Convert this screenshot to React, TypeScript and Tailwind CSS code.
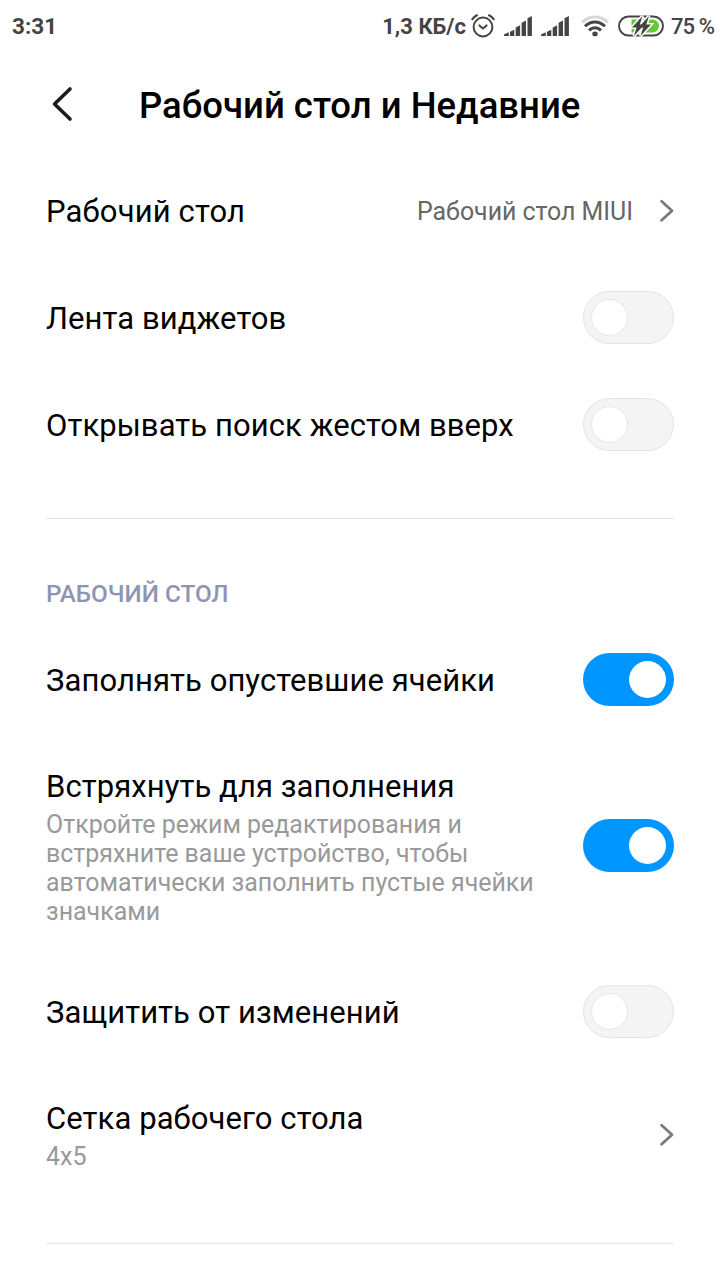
import type { ReactNode } from "react";

function AlarmIcon() {
  return (
    <svg className="mb-[1px]" width="24" height="24" viewBox="0 0 24 24" fill="none" stroke="#444" strokeLinecap="round" strokeLinejoin="round">
      <circle cx="12" cy="13" r="9.4" strokeWidth="2" />
      <path d="M8.4 11.4 12 14.6 15.6 11.4" strokeWidth="2" />
      <path d="M1.4 5.2C2.6 3.5 4 2.2 5.9 1.3M22.6 5.2C21.4 3.5 20 2.2 18.1 1.3" strokeWidth="2.2" />
    </svg>
  );
}

function SignalIcon() {
  return (
    <svg width="28" height="20" viewBox="0 0 28 20" fill="#444">
      <path d="M0 20V18.6L4.8 16.2V20Z" />
      <path d="M6 15.8 10.3 13.8V20H6Z" />
      <path d="M11.7 11.4 16.1 9.2V20H11.7Z" />
      <path d="M17.6 6.8 22 4.6V20H17.6Z" />
      <path d="M23.5 2.2 27.9 0V20H23.5Z" />
    </svg>
  );
}

function WifiIcon() {
  return (
    <svg width="28" height="22" viewBox="0 0 28 22" fill="none" strokeWidth="3">
      <path d="M1 7.3C8.4 0.2 19.6 0.2 27 7.3" stroke="#d6d6d6" />
      <path d="M4 11.3C9.8 5.6 18.2 5.6 24 11.3" stroke="#444" />
      <path d="M8 15.4C11.5 12 16.5 12 20 15.4" stroke="#444" />
      <ellipse cx="14" cy="18.9" rx="2.7" ry="2.3" fill="#444" />
    </svg>
  );
}

function BatteryIcon() {
  return (
    <svg width="46" height="22" viewBox="0 0 46 22">
      <rect x="1" y="1.5" width="44" height="19" rx="9.5" fill="#fff" stroke="#444" strokeWidth="1.9" />
      <path d="M13.5 4.5H34.5A6.5 6.5 0 0 1 34.5 17.5H13.5Z" fill="#62c936" />
      <g stroke="#fff" strokeWidth="3" fill="#fff">
        <path d="M24.5 1 14 12.5H18.6L16 21 26.5 9.5H21.8Z" />
        <path d="M31 1 20.5 12.5H25.1L22.5 21 33 9.5H28.3Z" />
      </g>
      <g fill="#444">
        <path d="M24.5 1 14 12.5H18.6L16 21 26.5 9.5H21.8Z" />
        <path d="M31 1 20.5 12.5H25.1L22.5 21 33 9.5H28.3Z" />
      </g>
    </svg>
  );
}

function Chevron() {
  return (
    <svg className="shrink-0" width="15" height="24" viewBox="0 0 15 24" fill="none" stroke="#7a7a7a" strokeWidth="2.8" strokeLinecap="round" strokeLinejoin="round">
      <path d="M2.6 2.2 13 11.7 2.6 21.2" />
    </svg>
  );
}

function Toggle({ on = false }: { on?: boolean }) {
  return on ? (
    <div role="switch" aria-checked="true" className="flex h-[53px] w-[91px] shrink-0 items-center justify-end rounded-full bg-[#0096ff] pr-[8px]">
      <div className="size-[37px] rounded-full bg-white" />
    </div>
  ) : (
    <div role="switch" aria-checked="false" className="flex h-[53px] w-[91px] shrink-0 items-center rounded-full border border-[#e3e3e3] bg-[#f4f4f4] pl-[7px]">
      <div className="size-[37px] rounded-full border border-[#e6e6e6] bg-white" />
    </div>
  );
}

function Row({ title, detail, height = "h-[107px]", children }: { title: string; detail?: string; height?: string; children: ReactNode }) {
  return (
    <div className={`flex items-center justify-between ${height}`}>
      <div className="w-[500px] pt-[2px]">
        <div className="text-[31px] leading-[38px] tracking-[0.08px] whitespace-nowrap">{title}</div>
        {detail && <div className="mt-[4px] text-[24.95px] leading-[29px] whitespace-pre-line text-[#999]">{detail}</div>}
      </div>
      {children}
    </div>
  );
}

export default function App() {
  return (
    <div className="flex h-[1280px] w-[720px] flex-col overflow-hidden bg-white font-['Roboto',sans-serif] text-black">
      <header className="flex h-[52px] items-center justify-between pr-[7px] pl-[12px] text-[22px] text-[#444]">
        <span className="pt-[1px] text-[22.5px] font-bold">3:31</span>
        <div className="flex items-center">
          <span className="mr-[5px] pt-[1px] font-bold">1,3 КБ/с</span>
          <AlarmIcon />
          <div className="ml-[9px] flex gap-[9px]">
            <SignalIcon />
            <SignalIcon />
          </div>
          <div className="ml-[12px]"><WifiIcon /></div>
          <div className="ml-[9px]"><BatteryIcon /></div>
          <span className="ml-[7px] w-[42px] font-medium tracking-[-0.9px] whitespace-nowrap">75 %</span>
        </div>
      </header>
      <div className="flex h-[105px] items-center pl-[50px]">
        <svg className="mb-[1px]" width="24" height="36" viewBox="0 0 24 36" fill="none" stroke="#1c1c1c" strokeWidth="3.6" strokeLinecap="round" strokeLinejoin="round">
          <path d="M20 3 4.5 18 20 33" />
        </svg>
        <h1 className="ml-[65px] pt-[3px] text-[36.5px] leading-[44px] font-medium whitespace-nowrap">Рабочий стол и Недавние</h1>
      </div>
      <main className="flex flex-col px-[46px]">
        <div className="flex h-[107px] items-center">
          <span className="pt-[3px] text-[31px] leading-[38px] tracking-[0.15px] whitespace-nowrap">Рабочий стол</span>
          <span className="mr-[26px] ml-auto pt-[2px] text-[24.9px] whitespace-nowrap text-[#666]">Рабочий стол MIUI</span>
          <Chevron />
        </div>
        <Row title="Лента виджетов"><Toggle /></Row>
        <Row title="Открывать поиск жестом вверх"><Toggle /></Row>
        <hr className="mt-[40px] border-t border-[#e4e4e4]" />
        <h2 className="mt-[57px] mb-[14px] text-[24.3px] leading-[36px] font-medium text-[#8f94b3]">РАБОЧИЙ СТОЛ</h2>
        <Row title="Заполнять опустевшие ячейки"><Toggle on /></Row>
        <Row
          title="Встряхнуть для заполнения"
          detail={"Откройте режим редактирования и\nвстряхните ваше устройство, чтобы\nавтоматически заполнить пустые ячейки\nзначками"}
          height="h-[225px]"
        >
          <Toggle on />
        </Row>
        <Row title="Защитить от изменений"><Toggle /></Row>
        <Row title="Сетка рабочего стола" detail="4x5" height="h-[139px]"><Chevron /></Row>
        <hr className="mt-[39px] border-t border-[#e4e4e4]" />
      </main>
    </div>
  );
}
